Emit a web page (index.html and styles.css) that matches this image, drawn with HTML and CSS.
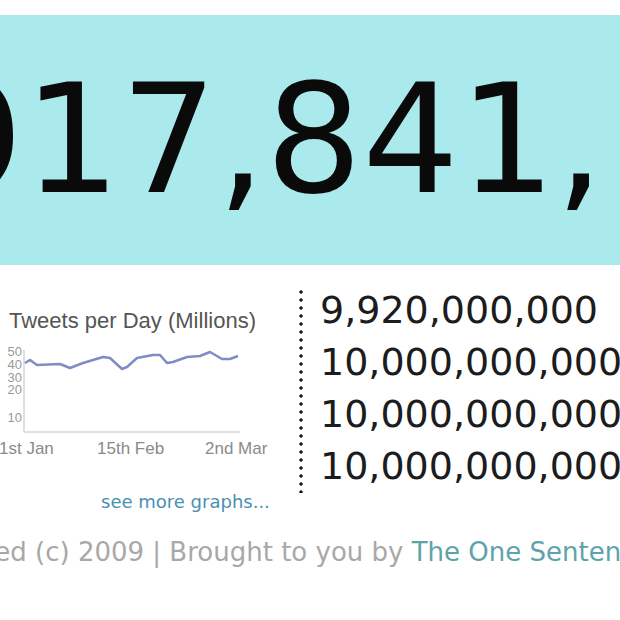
FILE: index.html
```html
<!DOCTYPE html>
<html>
<head>
<meta charset="utf-8">
<title>Tweet counter</title>
<link rel="stylesheet" href="styles.css">
</head>
<body>
<div class="top"></div>
<header class="band">
  <div class="count">2,917,841,105</div>
</header>
<main class="stats">
  <section class="graph">
    <h2 class="graph-title">Tweets per Day (Millions)</h2>
    <svg class="chart" width="290" height="125" viewBox="0 0 290 125">
      <g class="ylabels">
        <text x="22" y="16">50</text>
        <text x="22" y="29">40</text>
        <text x="22" y="42">30</text>
        <text x="22" y="54">20</text>
        <text x="22" y="82">10</text>
      </g>
      <line class="axis" x1="24" y1="10" x2="24" y2="92"/>
      <line class="axis" x1="24" y1="92" x2="240" y2="92"/>
      <polyline class="series" points="25,23 30,20 37,25 60,24 70,28 83,23 103,17 110,18 122,29 127,27 137,18 153,15 160,15 167,23 173,22 187,17 200,16 210,12 222,19 230,19 238,16"/>
      <g class="xlabels">
        <text x="-1" y="114">1st Jan</text>
        <text x="97" y="114">15th Feb</text>
        <text x="205" y="114">2nd Mar</text>
      </g>
    </svg>
    <a class="more" href="#">see more graphs...</a>
  </section>
  <div class="divider"></div>
  <ol class="totals">
    <li>9,920,000,000</li>
    <li>10,000,000,000</li>
    <li>10,000,000,000</li>
    <li>10,000,000,000</li>
  </ol>
</main>
<footer class="footer">All Rights Reserved (c) 2009 | Brought to you by <a href="#">The One Sentence Blog</a></footer>
</body>
</html>
```
FILE: styles.css
```css
html, body {
  margin: 0;
  padding: 0;
}
body {
  width: 620px;
  height: 620px;
  overflow: hidden;
  background: #ffffff;
  font-family: "DejaVu Sans", Verdana, sans-serif;
}
.top {
  height: 15px;
}
.band {
  height: 250px;
  box-sizing: border-box;
  padding-top: 49px;
  background: #aaeaec;
  overflow: hidden;
}
.count {
  margin-left: -218px;
  font-size: 152px;
  line-height: 152px;
  white-space: nowrap;
  color: #0a0a0a;
}
.stats {
  display: flex;
  align-items: flex-start;
}
.graph {
  width: 299px;
  flex: none;
  padding-top: 43px;
}
.graph-title {
  margin: 0 0 0 9px;
  font-family: "Liberation Sans", Arial, sans-serif;
  font-weight: normal;
  font-size: 22px;
  line-height: 26px;
  color: #555555;
  white-space: nowrap;
}
.chart {
  display: block;
  margin-top: 6px;
  overflow: visible;
}
.axis {
  stroke: #d4d4d4;
  stroke-width: 1.5;
}
.series {
  fill: none;
  stroke: #7f8dc6;
  stroke-width: 2.5;
  stroke-linejoin: round;
}
.ylabels text {
  font-family: "Liberation Sans", Arial, sans-serif;
  font-size: 13px;
  fill: #999999;
  text-anchor: end;
}
.xlabels text {
  font-family: "Liberation Sans", Arial, sans-serif;
  font-size: 17px;
  fill: #8a8a8a;
}
.more {
  display: block;
  margin-top: 27px;
  padding-left: 101px;
  font-size: 18px;
  line-height: 20px;
  color: #4a8fb4;
  text-decoration: none;
  white-space: nowrap;
}
.divider {
  flex: none;
  width: 4px;
  height: 205px;
  margin-top: 23px;
  background-image: radial-gradient(circle, #1a1a1a 1.4px, transparent 1.9px);
  background-size: 4px 8px;
}
.totals {
  list-style: none;
  margin: 19px 0 0 17px;
  padding: 0;
  font-size: 38px;
  line-height: 52px;
  color: #1c1c1c;
  white-space: nowrap;
}
.footer {
  margin-top: 25px;
  margin-left: -225px;
  font-size: 26px;
  line-height: 30px;
  color: #a8a8a8;
  white-space: nowrap;
}
.footer a {
  color: #5ea3ab;
  text-decoration: none;
}
```
